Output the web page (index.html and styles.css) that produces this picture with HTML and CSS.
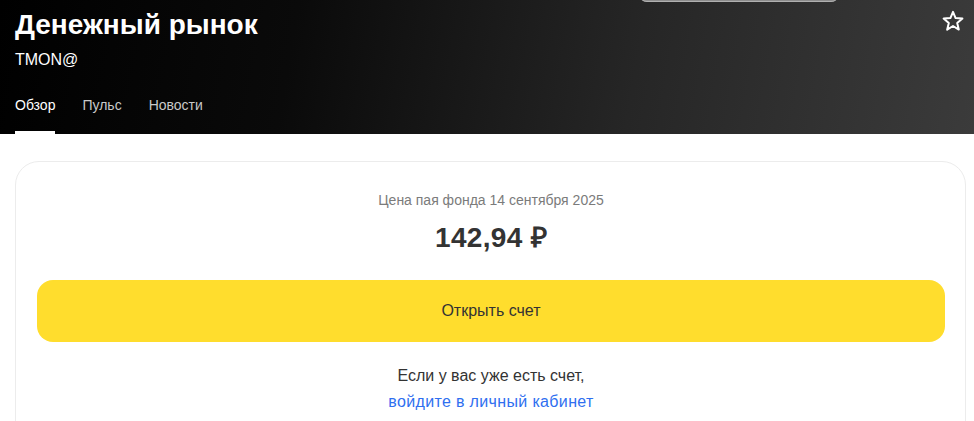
FILE: index.html
```html
<!DOCTYPE html>
<html lang="ru">
<head>
<meta charset="utf-8">
<title>Денежный рынок</title>
<link rel="stylesheet" href="styles.css">
</head>
<body>
<header class="hero">
  <div class="search-stub"></div>
  <div class="title-row">
    <h1 class="title">Денежный рынок</h1>
    <svg class="star" width="24" height="24" viewBox="0 0 24 24" aria-hidden="true">
      <polygon points="12,2.8 14.6,9.1 21.4,9.6 16.2,14 17.8,20.6 12,17 6.2,20.6 7.8,14 2.6,9.6 9.4,9.1" fill="none" stroke="#ffffff" stroke-width="2" stroke-linejoin="round"/>
    </svg>
  </div>
  <div class="ticker">TMON@</div>
  <nav class="tabs">
    <span class="tab active">Обзор</span>
    <span class="tab">Пульс</span>
    <span class="tab">Новости</span>
  </nav>
</header>
<main class="card">
  <div class="label">Цена пая фонда 14 сентября 2025</div>
  <div class="price">142,94 ₽</div>
  <button class="open-btn">Открыть счет</button>
  <p class="login">Если у вас уже есть счет,<br><a class="link" href="#">войдите в личный кабинет</a></p>
</main>
</body>
</html>
```

FILE: styles.css
```css
html, body {
  margin: 0;
  padding: 0;
  background: #ffffff;
  font-family: "Liberation Sans", Arial, sans-serif;
}

.hero {
  position: relative;
  height: 134px;
  box-sizing: border-box;
  padding: 9px 9px 0 15px;
  background: linear-gradient(100deg, #000000 0%, #0a0a0a 30%, #262626 65%, #3b3b3b 100%);
  color: #ffffff;
  overflow: hidden;
}

.search-stub {
  position: absolute;
  left: 639px;
  top: -30px;
  width: 200px;
  height: 32px;
  border-radius: 8px;
  background: #8c8c8c;
  box-shadow: inset 0 -1px 0 #b0b0b0;
}

.title-row {
  display: flex;
  justify-content: space-between;
  align-items: flex-start;
}

.title {
  margin: 0;
  font-size: 28px;
  line-height: 32px;
  font-weight: 700;
}

.star {
  display: block;
}

.ticker {
  margin-top: 9px;
  font-size: 16px;
  line-height: 20px;
}

.tabs {
  display: flex;
  gap: 27px;
  margin-top: 25px;
}

.tab {
  font-size: 14px;
  line-height: 20px;
  padding-bottom: 16px;
  border-bottom: 3px solid transparent;
  color: #c9c9c9;
}

.tab.active {
  color: #ffffff;
  border-bottom-color: #ffffff;
}

.card {
  margin: 27px 8px 0 15px;
  border: 1px solid #ececec;
  border-radius: 24px;
  padding: 28px 20px 40px 21px;
  text-align: center;
}

.label {
  font-size: 14px;
  line-height: 20px;
  color: #7b7b7b;
}

.price {
  margin-top: 10px;
  font-size: 28px;
  line-height: 36px;
  font-weight: 700;
  color: #333333;
  letter-spacing: 0.3px;
}

.open-btn {
  display: block;
  width: 100%;
  height: 62px;
  margin-top: 24px;
  border: none;
  border-radius: 16px;
  background: #ffdd2d;
  color: #333333;
  font-family: "Liberation Sans", Arial, sans-serif;
  font-size: 16px;
}

.login {
  margin: 21px 0 0;
  font-size: 16px;
  line-height: 26px;
  color: #333333;
}

.link {
  color: #2f6ff0;
  text-decoration: none;
  letter-spacing: 0.35px;
}
```
